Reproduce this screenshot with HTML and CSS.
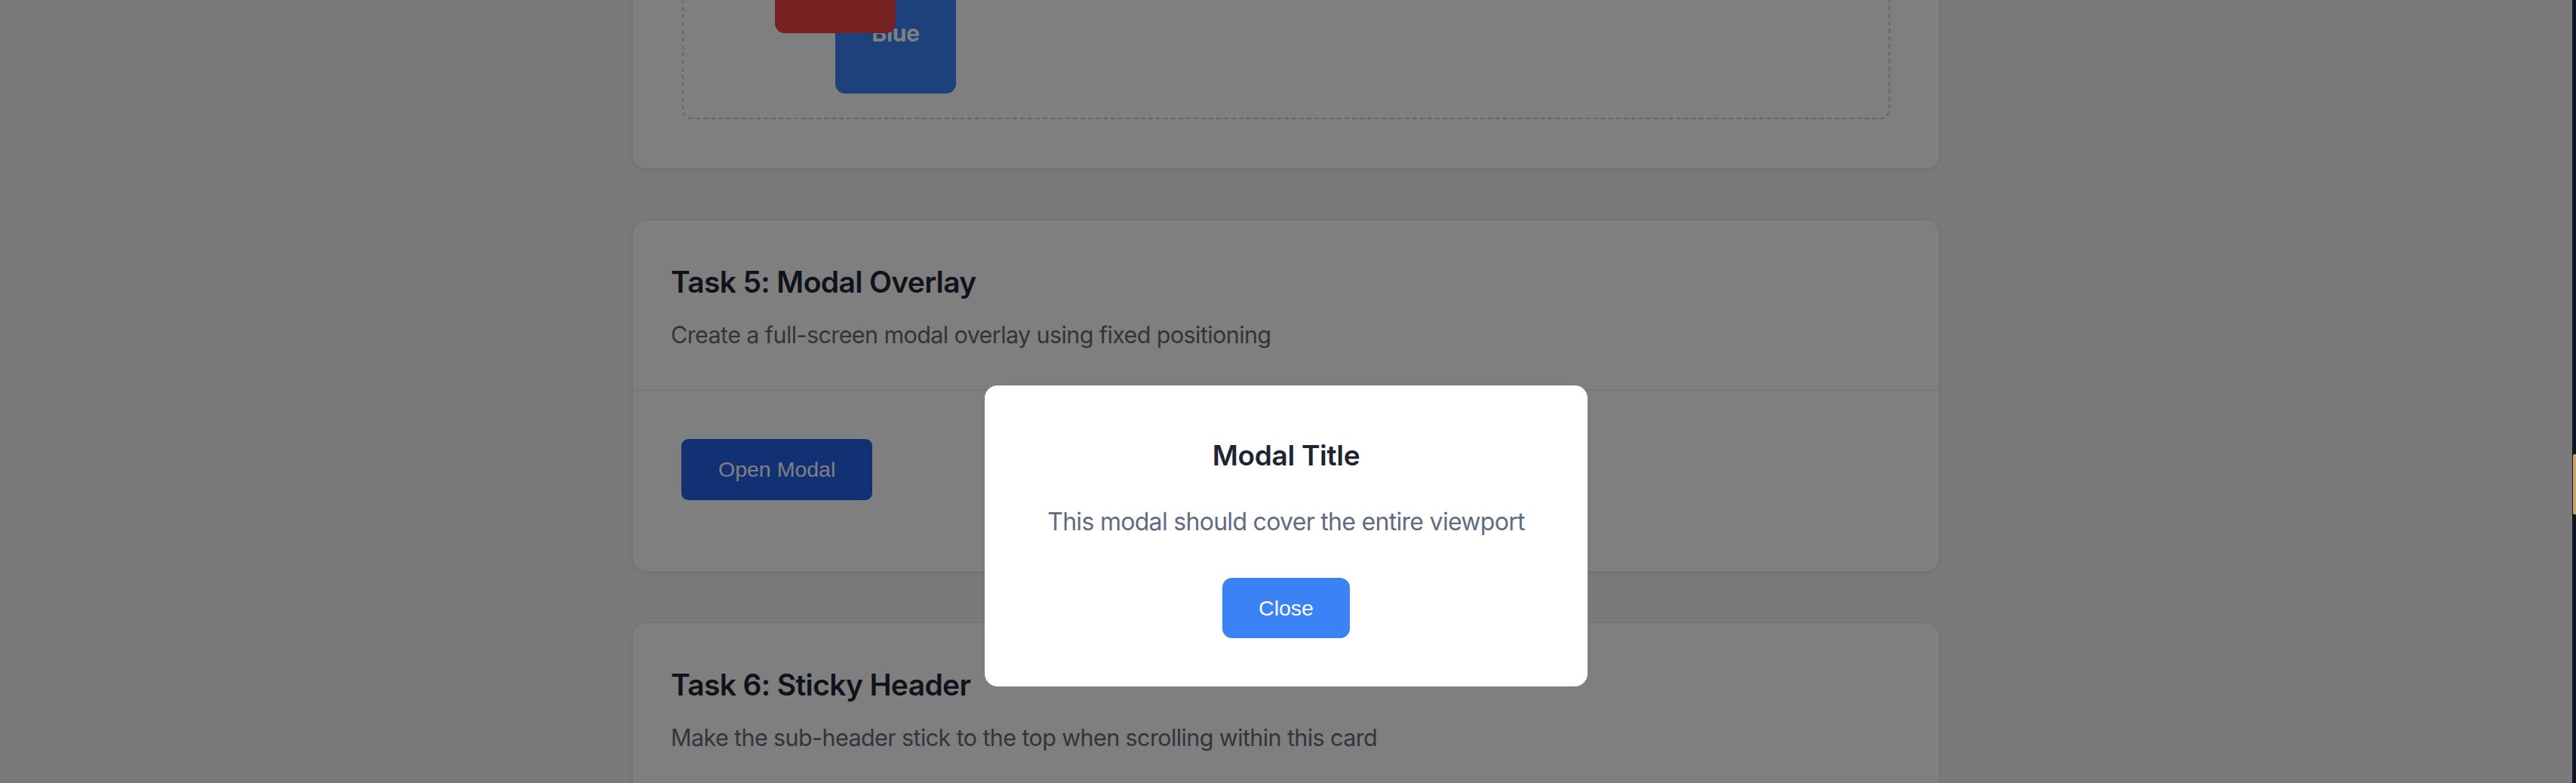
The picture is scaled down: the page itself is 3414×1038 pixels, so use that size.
FILE: index.html
```html
<!DOCTYPE html>
<html lang="en">
<head>
<meta charset="utf-8">
<title>CSS Positioning Tasks</title>
<link rel="stylesheet" href="styles.css">
</head>
<body>
<div class="screen">
  <div class="page">
    <main class="column">
      <section class="card card-z">
        <div class="card-body body-z">
          <div class="dash">
            <div class="stage">
              <div class="box box-blue">Blue</div>
              <div class="box box-red">Red</div>
            </div>
          </div>
        </div>
      </section>

      <section class="card">
        <header class="card-head">
          <h2 class="card-title">Task 5: Modal Overlay</h2>
          <p class="card-desc">Create a full-screen modal overlay using fixed positioning</p>
        </header>
        <div class="card-body body-modal">
          <button class="btn btn-open" type="button">Open Modal</button>
        </div>
      </section>

      <section class="card">
        <header class="card-head">
          <h2 class="card-title">Task 6: Sticky Header</h2>
          <p class="card-desc">Make the sub-header stick to the top when scrolling within this card</p>
        </header>
        <div class="card-body body-sticky"></div>
      </section>
    </main>

    <div class="overlay">
      <div class="modal">
        <h3 class="modal-title">Modal Title</h3>
        <p class="modal-text">This modal should cover the entire viewport</p>
        <button class="btn btn-close" type="button">Close</button>
      </div>
    </div>
  </div>
  <div class="edge"><span class="edge-tab"></span></div>
</div>
</body>
</html>
```

FILE: styles.css
```css
* { box-sizing: border-box; }

html, body {
  margin: 0;
  padding: 0;
  height: 100%;
}

body {
  font-family: Inter, "Noto Sans", sans-serif;
  background: #0e1626;
}

.screen {
  display: flex;
  height: 100vh;
  overflow: hidden;
}

.page {
  flex: 1;
  position: relative;
  overflow: hidden;
  background: #f4f5f7;
}

.column {
  width: 1733px;
  margin: -216px auto 0;
  display: flex;
  flex-direction: column;
  gap: 67px;
}

.card {
  background: #ffffff;
  border: 1px solid #e5e7eb;
  border-radius: 18px;
  box-shadow: 0 2px 6px rgba(0, 0, 0, 0.08);
}

.body-z {
  padding: 65px;
}

.dash {
  border: 2px dashed #cdd1d8;
  border-radius: 13px;
  padding: 32px;
}

.stage {
  position: relative;
  height: 240px;
}

.box {
  position: absolute;
  width: 160px;
  height: 160px;
  border-radius: 13px;
  display: flex;
  align-items: center;
  justify-content: center;
  color: #ffffff;
  font-weight: 700;
  font-size: 30px;
  letter-spacing: -0.3px;
}

.box-red {
  top: 0;
  left: 89px;
  background: #ef4444;
  z-index: 2;
}

.box-blue {
  top: 80px;
  left: 169px;
  background: #3b82f6;
  z-index: 1;
}

.card-head {
  padding: 51px 50px 51px;
  border-bottom: 1px solid #e5e7eb;
}

.card-title {
  margin: 0;
  font-size: 39px;
  line-height: 61px;
  font-weight: 600;
  letter-spacing: -0.65px;
  color: #1f2937;
}

.card-desc {
  margin: 18px 0 0;
  font-size: 30.5px;
  line-height: 43.5px;
  letter-spacing: -0.6px;
  color: #636a78;
}

.body-modal {
  padding: 64px 64px 94px;
}

.body-sticky {
  height: 300px;
}

.btn {
  font-family: "Liberation Sans", Arial, sans-serif;
  font-size: 28.5px;
  color: #ffffff;
  border: 0;
  display: inline-flex;
  align-items: center;
  justify-content: center;
  cursor: pointer;
}

.btn-open {
  height: 81px;
  padding: 0 49px;
  border-radius: 9px;
  background: #2563eb;
}

.btn-close {
  height: 80px;
  padding: 0 48px;
  border-radius: 13px;
  background: #3b82f6;
}

.overlay {
  position: absolute;
  inset: 0;
  z-index: 10;
  background: rgba(0, 0, 0, 0.5);
  display: flex;
  justify-content: center;
  align-items: flex-start;
  padding-top: 511px;
}

.modal {
  width: 799px;
  background: #ffffff;
  border-radius: 17px;
  padding: 65px 65px 64px;
  text-align: center;
}

.modal-title {
  margin: 0 0 34px;
  font-size: 37px;
  line-height: 56px;
  font-weight: 600;
  letter-spacing: -0.3px;
  color: #1e2433;
}

.modal-text {
  margin: 0 0 48px;
  font-size: 32px;
  line-height: 52px;
  letter-spacing: -0.7px;
  color: #5f6b80;
}

.edge {
  width: 5px;
  flex: none;
  background: #0e1626;
  display: flex;
  flex-direction: column;
}

.edge-tab {
  display: block;
  margin: 602px 0 0 1px;
  width: 4px;
  height: 80px;
  border-radius: 2px 0 0 2px;
  background: #c9a66b;
}
```
